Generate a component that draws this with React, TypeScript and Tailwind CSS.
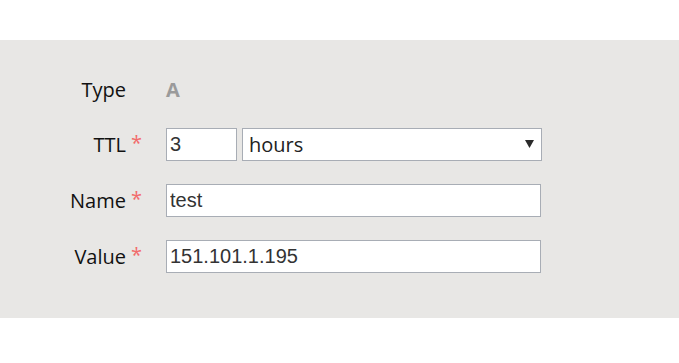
const LABEL = "font-['Open_Sans','Noto_Sans',sans-serif] text-[20px] text-[#111]"
const INPUT =
  "h-[33px] border border-[#a8adb5] bg-white pl-[3px] font-['Liberation_Sans',Arial,sans-serif] text-[20px] text-[#333] outline-none"

function Label({ text, required = true }: { text: string; required?: boolean }) {
  return (
    <div className={`${LABEL} flex w-[142px] shrink-0 items-center justify-end leading-none`}>
      <span>{text}</span>
      <span className={`relative -top-[2px] ml-[5px] text-[#f26b6b] ${required ? '' : 'invisible'}`}>*</span>
    </div>
  )
}

export default function App() {
  return (
    <div className="min-h-[363px] bg-white pt-[40px]">
      <div className="bg-[#e8e7e5] pt-[34px] pb-[45px]">
        <div className="flex h-[32px] items-center gap-[24px]">
          <Label text="Type" required={false} />
          <span className="font-['Open_Sans','Noto_Sans',sans-serif] text-[20px] font-bold leading-none text-[#9a9a9a]">
            A
          </span>
        </div>

        <div className="mt-[22px] flex items-center gap-[24px]">
          <Label text="TTL" />
          <div className="flex items-center gap-[5px]">
            <input className={`${INPUT} w-[71px]`} defaultValue="3" />
            <div className="relative">
              <select
                defaultValue="hours"
                className="h-[33px] w-[300px] appearance-none border border-[#a8adb5] bg-white pl-[6px] font-['Open_Sans','Noto_Sans',sans-serif] text-[20px] text-[#222] outline-none"
              >
                <option value="minutes">minutes</option>
                <option value="hours">hours</option>
                <option value="days">days</option>
              </select>
              <svg
                className="pointer-events-none absolute right-[8px] top-[12px]"
                width="9"
                height="8"
                viewBox="0 0 9 8"
              >
                <path d="M0 0h9L4.5 8z" fill="#2b2b2b" />
              </svg>
            </div>
          </div>
        </div>

        <div className="mt-[23px] flex items-center gap-[24px]">
          <Label text="Name" />
          <input className={`${INPUT} w-[375px]`} defaultValue="test" />
        </div>

        <div className="mt-[23px] flex items-center gap-[24px]">
          <Label text="Value" />
          <input className={`${INPUT} w-[375px]`} defaultValue="151.101.1.195" />
        </div>
      </div>
    </div>
  )
}
